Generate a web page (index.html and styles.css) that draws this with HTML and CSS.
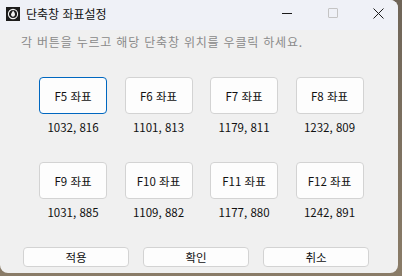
FILE: index.html
```html
<!DOCTYPE html>
<html lang="ko">
<head>
    <meta charset="UTF-8">
    <title>단축창 좌표설정</title>
    <link rel="stylesheet" href="styles.css">
</head>
<body>
    <div class="window">
        <div class="titlebar">
            <svg class="app-icon" width="14" height="14" viewBox="0 0 14 14">
                <rect width="14" height="14" fill="#1c1c1c"/>
                <circle cx="7" cy="7" r="4.6" fill="none" stroke="#f2f2f2" stroke-width="1.1"/>
                <path d="M7 3.6 C8.6 5.4 9 6.6 9 7.6 C9 8.8 8.1 9.8 7 9.8 C5.9 9.8 5 8.8 5 7.6 C5 6.4 6.3 5.6 7 3.6 Z" fill="#f2f2f2"/>
            </svg>
            <span class="title">단축창 좌표설정</span>
            <div class="caption-buttons">
                <span class="cap-btn"><span class="min-line"></span></span>
                <span class="cap-btn"><span class="max-box"></span></span>
                <span class="cap-btn">
                    <svg width="11" height="11" viewBox="0 0 11 11">
                        <path d="M0.5 0.5 L10.5 10.5 M10.5 0.5 L0.5 10.5" stroke="#1a1a1a" stroke-width="1"/>
                    </svg>
                </span>
            </div>
        </div>

        <div class="client">
            <p class="hint">각 버튼을 누르고 해당 단축창 위치를 우클릭 하세요.</p>

            <div class="key-grid">
                <div class="cell"><button class="key-btn focused">F5 좌표</button><span class="coord">1032, 816</span></div>
                <div class="cell"><button class="key-btn">F6 좌표</button><span class="coord">1101, 813</span></div>
                <div class="cell"><button class="key-btn">F7 좌표</button><span class="coord">1179, 811</span></div>
                <div class="cell"><button class="key-btn">F8 좌표</button><span class="coord">1232, 809</span></div>
                <div class="cell"><button class="key-btn">F9 좌표</button><span class="coord">1031, 885</span></div>
                <div class="cell"><button class="key-btn">F10 좌표</button><span class="coord">1109, 882</span></div>
                <div class="cell"><button class="key-btn">F11 좌표</button><span class="coord">1177, 880</span></div>
                <div class="cell"><button class="key-btn">F12 좌표</button><span class="coord">1242, 891</span></div>
            </div>

            <div class="actions">
                <button class="act-btn">적용</button>
                <button class="act-btn">확인</button>
                <button class="act-btn">취소</button>
            </div>
        </div>
    </div>
</body>
</html>
```

FILE: styles.css
```css
body {
    margin: 0;
    width: 402px;
    height: 276px;
    overflow: hidden;
    background: linear-gradient(to bottom, #6f6558, #8a7c68);
    font-family: "Noto Sans CJK KR", "Liberation Sans", sans-serif;
}

.window {
    width: 398px;
    height: 273px;
    background: #f0f0f0;
    border-radius: 0 8px 8px 8px;
    overflow: hidden;
    display: flex;
    flex-direction: column;
}

.titlebar {
    height: 30px;
    background: #eff1f7;
    display: flex;
    align-items: center;
    padding-left: 6px;
}

.app-icon {
    margin-top: -3px;
}

.title {
    margin-left: 6px;
    margin-top: -4px;
    font-size: 12px;
    color: #111;
}

.caption-buttons {
    margin-left: auto;
    margin-right: -3px;
    display: flex;
    height: 100%;
}

.cap-btn {
    width: 45.5px;
    display: flex;
    align-items: center;
    justify-content: center;
    padding-bottom: 4px;
}

.min-line {
    width: 10px;
    height: 1px;
    background: #1a1a1a;
}

.max-box {
    width: 8px;
    height: 8px;
    border: 1px solid #c4c4c4;
    border-radius: 1px;
}

.client {
    flex: 1;
    padding: 4px 0 0 0;
}

.hint {
    margin: 0 0 0 21px;
    font-size: 12px;
    line-height: 16px;
    color: #8a8a8a;
    letter-spacing: 0.8px;
}

.key-grid {
    display: grid;
    grid-template-columns: repeat(4, 68px);
    column-gap: 17.5px;
    row-gap: 27px;
    margin: 27px 0 0 39px;
}

.cell {
    display: flex;
    flex-direction: column;
    align-items: center;
}

.key-btn {
    width: 68px;
    height: 37px;
    background: #fdfdfd;
    border: 1px solid #d3d3d3;
    border-radius: 4px;
    font-family: inherit;
    font-size: 11.5px;
    color: #111;
    padding: 0;
}

.key-btn.focused {
    border: 1px solid #0067c0;
}

.coord {
    margin-top: 5px;
    font-size: 11.5px;
    line-height: 16px;
    color: #111;
}

.actions {
    display: flex;
    gap: 14px;
    margin: 27px 0 0 23px;
}

.act-btn {
    width: 106px;
    height: 20px;
    background: #fdfdfd;
    border: 1px solid #d3d3d3;
    border-radius: 4px;
    font-family: inherit;
    font-size: 11.5px;
    line-height: 16px;
    color: #111;
    padding: 0;
}
```
